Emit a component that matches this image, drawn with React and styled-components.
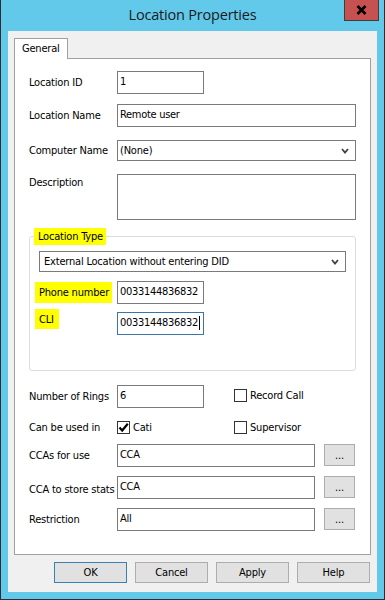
import React from "react";
import styled, { createGlobalStyle } from "styled-components";

const GlobalStyle = createGlobalStyle`
  html, body {
    margin: 0;
    padding: 0;
    background: #ffffff;
  }
  * {
    box-sizing: border-box;
  }
`;

const Window = styled.div`
  width: 385px;
  height: 600px;
  background: #62c9ea;
  border: 1px solid #2e2e2e;
  border-top: none;
  display: flex;
  flex-direction: column;
  font-family: "DejaVu Sans Condensed", "Liberation Sans", Arial, sans-serif;
  font-size: 11px;
  letter-spacing: -0.2px;
  color: #000;
`;

const TitleBar = styled.div`
  height: 31px;
  display: grid;
  grid-template-columns: 1fr auto 1fr;
  align-items: start;
`;

const Title = styled.div`
  grid-column: 2;
  font-family: "Open Sans", "Noto Sans", sans-serif;
  font-size: 14.5px;
  letter-spacing: -0.2px;
  color: #1b1b1b;
  line-height: 29px;
`;

const CloseButton = styled.div`
  grid-column: 3;
  justify-self: end;
  margin-right: 5px;
  width: 35px;
  height: 21px;
  background: #c75050;
  border: 1px solid #3d3d3d;
  border-top: none;
  display: flex;
  align-items: center;
  justify-content: center;
`;

const Client = styled.div`
  flex: 1;
  margin: 0 7px 7px 7px;
  background: #f0f0f0;
  padding: 7px 7px 0 6px;
  display: flex;
  flex-direction: column;
`;

const TabStrip = styled.div`
  display: flex;
`;

const Tab = styled.div`
  position: relative;
  z-index: 1;
  height: 21px;
  margin-bottom: -1px;
  padding: 3px 7px 0 7px;
  background: #ffffff;
  border: 1px solid #a0a0a0;
  border-bottom: none;
`;

const Panel = styled.div`
  width: 357px;
  height: 497px;
  background: #ffffff;
  border: 1px solid #a0a0a0;
  padding: 12px 0 0 14px;
  display: flex;
  flex-direction: column;
`;

const Row = styled.div`
  display: flex;
  align-items: ${(p) => (p.$top ? "flex-start" : "center")};
  margin-top: ${(p) => p.$mt || 0}px;
`;

const Label = styled.div`
  width: ${(p) => p.$w || 88}px;
  flex-shrink: 0;
  white-space: nowrap;
  padding-top: ${(p) => p.$pt || 0}px;
`;

const Field = styled.div`
  width: ${(p) => p.$w}px;
  height: ${(p) => p.$h || 23}px;
  background: #ffffff;
  border: 1px solid ${(p) => (p.$focused ? "#3b74a8" : "#7a7a7a")};
  padding: 3px 3px 0 ${(p) => p.$pl || 2}px;
  white-space: nowrap;
  display: flex;
  align-items: flex-start;
  letter-spacing: -0.3px;
`;

const Caret = styled.span`
  display: inline-block;
  width: 1px;
  height: 14px;
  background: #000;
  margin-left: 1px;
`;

const Select = styled.div`
  width: ${(p) => p.$w}px;
  height: 21px;
  background: #ffffff;
  border: 1px solid #7a7a7a;
  padding: 0 6px 0 ${(p) => p.$pl || 2}px;
  display: flex;
  align-items: center;
  justify-content: space-between;
`;

const Group = styled.fieldset`
  margin: 8px 0 0 0;
  width: 327px;
  border: 1px solid #dcdcdc;
  border-radius: 3px;
  padding: 6px 9px 35px 9px;
  display: flex;
  flex-direction: column;
`;

const Legend = styled.legend`
  margin-left: -5px;
  padding: 2px 3px 2px 4px;
  background: #ffff00;
`;

const Highlight = styled.span`
  background: #ffff00;
  padding: ${(p) => p.$pad || "3px 3px 3px 4px"};
  margin-left: -4px;
  position: relative;
  top: ${(p) => p.$dy || 0}px;
`;

const CheckGrid = styled.div`
  display: grid;
  grid-template-columns: 88px 117px auto;
  align-items: center;
  margin-top: ${(p) => p.$mt || 0}px;
`;

const CheckItem = styled.div`
  display: flex;
  align-items: center;
  gap: 3px;
  margin-top: ${(p) => p.$dy || 0}px;
`;

const Box = styled.div`
  width: 13px;
  height: 13px;
  border: 1px solid #333333;
  background: #ffffff;
  display: flex;
  align-items: center;
  justify-content: center;
`;

const DotsButton = styled.div`
  width: 31px;
  height: 22px;
  margin-left: 9px;
  margin-top: -2px;
  background: #e1e1e1;
  border: 1px solid #adadad;
  display: flex;
  align-items: center;
  justify-content: center;
  padding-top: 2px;
`;

const ButtonBar = styled.div`
  display: flex;
  justify-content: flex-end;
  gap: 8px;
  margin-top: 7px;
`;

const DialogButton = styled.div`
  width: 73px;
  height: 21px;
  background: #e1e1e1;
  border: 1px solid ${(p) => (p.$default ? "#3c7fb1" : "#adadad")};
  display: flex;
  align-items: center;
  justify-content: center;
`;

const Chevron = () => (
  <svg width="8" height="6" viewBox="0 0 8 6">
    <path d="M1 1 L4 4.5 L7 1" fill="none" stroke="#404040" strokeWidth="1.8" />
  </svg>
);

const CloseGlyph = () => (
  <svg width="11" height="10" viewBox="0 0 11 10">
    <path d="M1.5 1 L9.5 9 M9.5 1 L1.5 9" stroke="#000" strokeWidth="2.6" />
  </svg>
);

const CheckBox = ({ checked, label, dy }) => (
  <CheckItem $dy={dy}>
    <Box>
      {checked && (
        <svg width="11" height="11" viewBox="0 0 11 11">
          <path d="M1.5 5.5 L4.2 8.5 L9.8 1.8" fill="none" stroke="#000" strokeWidth="2.2" />
        </svg>
      )}
    </Box>
    <span>{label}</span>
  </CheckItem>
);

const picker = [
  { label: "CCAs for use", value: "CCA", mt: 10 },
  { label: "CCA to store stats", value: "CCA", mt: 9, pt: 4 },
  { label: "Restriction", value: "All", mt: 9 },
];

export default function App() {
  return (
    <>
      <GlobalStyle />
      <Window>
        <TitleBar>
          <Title>Location Properties</Title>
          <CloseButton>
            <CloseGlyph />
          </CloseButton>
        </TitleBar>
        <Client>
          <TabStrip>
            <Tab>General</Tab>
          </TabStrip>
          <Panel>
            <Row>
              <Label>Location ID</Label>
              <Field $w={87}>1</Field>
            </Row>
            <Row $mt={10}>
              <Label>Location Name</Label>
              <Field $w={239}>Remote user</Field>
            </Row>
            <Row $mt={13}>
              <Label>Computer Name</Label>
              <Select $w={239}>
                <span>(None)</span>
                <Chevron />
              </Select>
            </Row>
            <Row $mt={13} $top>
              <Label $pt={2}>Description</Label>
              <Field $w={239} $h={46} />
            </Row>

            <Group>
              <Legend>Location Type</Legend>
              <Select $w={307} $pl={4}>
                <span>External Location without entering DID</span>
                <Chevron />
              </Select>
              <Row $mt={9}>
                <Label $w={78}>
                  <Highlight $pad="4px 3px 4px 4px">Phone number</Highlight>
                </Label>
                <Field $w={87}>0033144836832</Field>
              </Row>
              <Row $mt={8}>
                <Label $w={78}>
                  <Highlight $pad="4px 5px 3px 4px" $dy={-4}>CLI</Highlight>
                </Label>
                <Field $w={87} $focused>
                  0033144836832
                  <Caret />
                </Field>
              </Row>
            </Group>

            <CheckGrid $mt={14}>
              <Label>Number of Rings</Label>
              <Field $w={87}>6</Field>
              <CheckBox label="Record Call" dy={-2} />
            </CheckGrid>
            <CheckGrid $mt={13}>
              <Label>Can be used in</Label>
              <CheckBox checked label="Cati" />
              <CheckBox label="Supervisor" />
            </CheckGrid>

            {picker.map((p) => (
              <Row key={p.label} $mt={p.mt}>
                <Label $pt={p.pt}>{p.label}</Label>
                <Field $w={198}>{p.value}</Field>
                <DotsButton>...</DotsButton>
              </Row>
            ))}
          </Panel>
          <ButtonBar>
            <DialogButton $default>OK</DialogButton>
            <DialogButton>Cancel</DialogButton>
            <DialogButton>Apply</DialogButton>
            <DialogButton>Help</DialogButton>
          </ButtonBar>
        </Client>
      </Window>
    </>
  );
}
